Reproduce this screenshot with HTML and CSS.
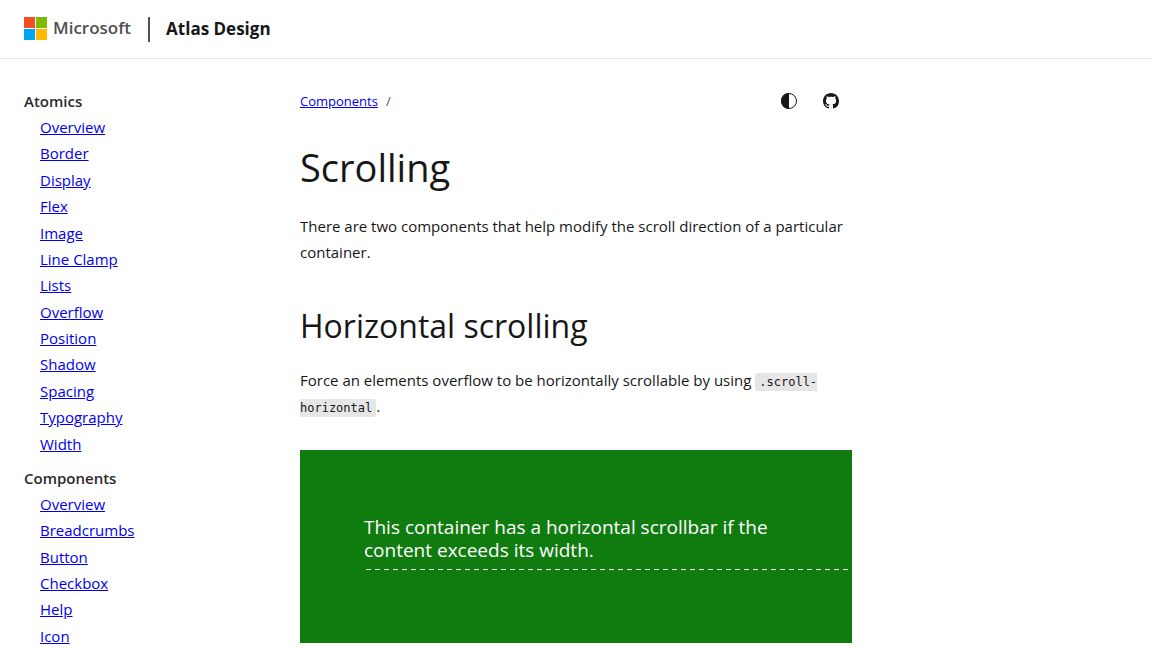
FILE: index.html
```html
<!DOCTYPE html>
<html lang="en">
<head>
<meta charset="utf-8">
<meta name="viewport" content="width=device-width, initial-scale=1">
<title>Scrolling - Atlas Design</title>
<link rel="stylesheet" href="styles.css">
</head>
<body>
<header class="site-header">
  <a class="brand" href="#">
    <svg class="brand-mark" viewBox="0 0 23 23" aria-hidden="true">
      <path fill="#f25022" d="M0 0h11v11H0z"/>
      <path fill="#7fba00" d="M12 0h11v11H12z"/>
      <path fill="#00a4ef" d="M0 12h11v11H0z"/>
      <path fill="#ffb900" d="M12 12h11v11H12z"/>
    </svg>
    <span class="brand-name">Microsoft</span>
  </a>
  <a class="site-name" href="#">Atlas Design</a>
</header>
<div class="layout">
  <nav class="sidebar" aria-label="Main">
    <h2 class="nav-title">Atomics</h2>
    <ul class="nav-list nav-list-atomics">
      <li><a href="#">Overview</a></li>
      <li><a href="#">Border</a></li>
      <li><a href="#">Display</a></li>
      <li><a href="#">Flex</a></li>
      <li><a href="#">Image</a></li>
      <li><a href="#">Line Clamp</a></li>
      <li><a href="#">Lists</a></li>
      <li><a href="#">Overflow</a></li>
      <li><a href="#">Position</a></li>
      <li><a href="#">Shadow</a></li>
      <li><a href="#">Spacing</a></li>
      <li><a href="#">Typography</a></li>
      <li><a href="#">Width</a></li>
    </ul>
    <h2 class="nav-title">Components</h2>
    <ul class="nav-list nav-list-components">
      <li><a href="#">Overview</a></li>
      <li><a href="#">Breadcrumbs</a></li>
      <li><a href="#">Button</a></li>
      <li><a href="#">Checkbox</a></li>
      <li><a href="#">Help</a></li>
      <li><a href="#">Icon</a></li>
    </ul>
  </nav>
  <main class="content">
    <div class="toolbar">
      <nav class="breadcrumbs" aria-label="Breadcrumbs">
        <a href="#">Components</a><span class="separator">/</span>
      </nav>
      <div class="actions">
        <button class="icon-button" type="button" aria-label="Change theme">
          <svg viewBox="0 0 16 16" aria-hidden="true">
            <circle cx="8" cy="8" r="7.5" fill="none" stroke="currentColor"/>
            <path fill="currentColor" d="M8 0a8 8 0 0 0 0 16z"/>
          </svg>
        </button>
        <a class="icon-button" href="#" aria-label="View on GitHub">
          <svg viewBox="0 0 16 16" aria-hidden="true">
            <path fill="currentColor" d="M8 0C3.58 0 0 3.58 0 8c0 3.54 2.29 6.53 5.47 7.59.4.07.55-.17.55-.38 0-.19-.01-.82-.01-1.49-2.01.37-2.53-.49-2.69-.94-.09-.23-.48-.94-.82-1.13-.28-.15-.68-.52-.01-.53.63-.01 1.08.58 1.23.82.72 1.21 1.87.87 2.33.66.07-.52.28-.87.51-1.07-1.78-.2-3.64-.89-3.64-3.95 0-.87.31-1.59.82-2.15-.08-.2-.36-1.02.08-2.12 0 0 .67-.21 2.2.82.64-.18 1.32-.27 2-.27s1.36.09 2 .27c1.53-1.04 2.2-.82 2.2-.82.44 1.1.16 1.92.08 2.12.51.56.82 1.27.82 2.15 0 3.07-1.87 3.75-3.65 3.95.29.25.54.73.54 1.48 0 1.07-.01 1.93-.01 2.2 0 .21.15.46.55.38A8.01 8.01 0 0 0 16 8c0-4.42-3.58-8-8-8z"/>
          </svg>
        </a>
      </div>
    </div>
    <h1 class="page-title">Scrolling</h1>
    <p class="body-text">There are two components that help modify the scroll direction of a particular container.</p>
    <h2 class="section-title">Horizontal scrolling</h2>
    <p class="body-text">Force an elements overflow to be horizontally scrollable by using <code class="code">.scroll-horizontal</code>.</p>
    <div class="example">
      <p class="example-text">This container has a horizontal scrollbar if the content exceeds its width.</p>
      <div class="example-dashes"></div>
    </div>
  </main>
</div>
</body>
</html>
```
FILE: styles.css
```css
* {
  box-sizing: border-box;
}

body {
  margin: 0;
  background: #fff;
  color: #171717;
  font-family: "Segoe UI", "Open Sans", "Noto Sans", sans-serif;
  font-size: 15px;
  line-height: 26px;
}

h1, h2, p, ul {
  margin: 0;
  padding: 0;
}

a {
  color: #0000ee;
}

.site-header {
  display: flex;
  align-items: center;
  padding: 16px 24px;
  border-bottom: 1px solid #e6e6e6;
}

.brand {
  display: flex;
  align-items: flex-start;
  gap: 6px;
  padding-right: 17px;
  border-right: 2px solid #505050;
  color: #505050;
  line-height: 22px;
  text-decoration: none;
}

.brand-mark {
  width: 23px;
  height: 23px;
  margin-bottom: 2px;
}

.brand-name {
  font-size: 17px;
  font-weight: 600;
}

.site-name {
  padding-left: 16px;
  color: #171717;
  font-size: 17px;
  font-weight: 700;
  text-decoration: none;
}

.layout {
  display: grid;
  grid-template-columns: 252px minmax(0, 552px);
  gap: 24px;
  padding: 29px 24px 0;
}

.nav-title {
  font-size: 15px;
  font-weight: 600;
  color: #2a2a2a;
}

.nav-list {
  display: grid;
  padding-left: 16px;
  list-style: none;
}

.nav-list-atomics {
  min-height: 343px;
  margin-bottom: 8px;
}

.nav-list-components {
  min-height: 158px;
}

.toolbar {
  display: flex;
  align-items: center;
  justify-content: space-between;
}

.breadcrumbs {
  display: flex;
  gap: 8px;
  font-size: 13px;
}

.separator {
  color: #505050;
}

.actions {
  display: flex;
  gap: 10px;
  padding-right: 5px;
}

.icon-button {
  display: flex;
  padding: 5px 8px;
  border: 0;
  background: none;
  color: #171717;
}

.icon-button svg {
  width: 16px;
  height: 16px;
}

.page-title {
  margin: 27px 0 20px;
  font-size: 38px;
  font-weight: 400;
  line-height: 52px;
}

.section-title {
  margin: 39px 0 19px;
  font-size: 32px;
  font-weight: 400;
  line-height: 44px;
}

.code {
  padding: 2px 4px;
  border-radius: 3px;
  background: #e6e6e6;
  font-family: Consolas, "DejaVu Sans Mono", monospace;
  font-size: 12px;
  line-height: 16px;
}

.example {
  margin-top: 31px;
  padding: 66px 0 73px 64px;
  overflow-x: auto;
  background: #107c10;
  color: #fff;
}

.example-text {
  max-width: 424px;
  font-size: 19px;
  line-height: 23px;
}

.example-dashes {
  height: 1px;
  margin: 7px 0 0 2px;
  background: repeating-linear-gradient(to right, #fff 0 5px, transparent 5px 9px);
}
```
